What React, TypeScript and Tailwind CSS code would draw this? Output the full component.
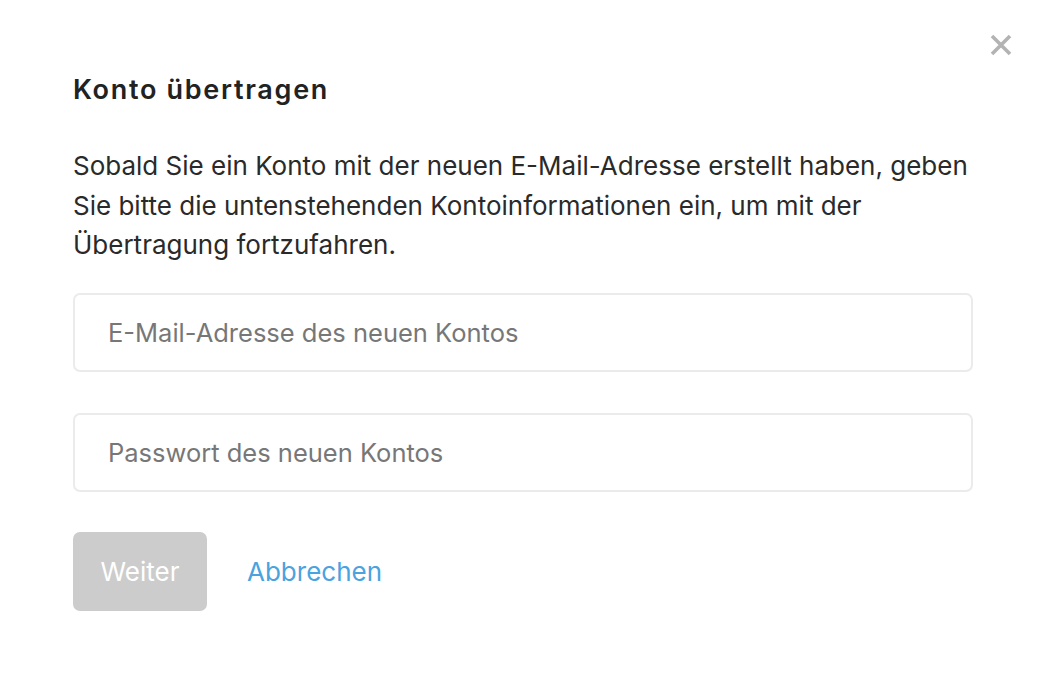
import React from "react";

const App = () => {
  return (
    <div
      className="relative w-[1048px] h-[678px] bg-white text-[#222222]"
      style={{ fontFamily: "Inter, 'Noto Sans', sans-serif" }}
    >
      <button className="absolute right-[35px] top-[33px] w-[24px] h-[24px] text-[#b3b3b3]">
        <svg viewBox="0 0 24 24" width="24" height="24" fill="none" stroke="currentColor" strokeWidth="3.6" strokeLinecap="butt">
          <path d="M3 3 L21 21 M21 3 L3 21" />
        </svg>
      </button>

      <div className="pl-[73px] pr-[75px] pt-[72px]">
        <h2 className="text-[27px] font-semibold leading-[36px] tracking-[1.7px]">Konto übertragen</h2>

        <p className="mt-[38px] text-[26px] leading-[39.5px] text-[#2a2a2a]">
          Sobald Sie ein Konto mit der neuen E-Mail-Adresse erstellt haben, geben Sie bitte die untenstehenden
          Kontoinformationen ein, um mit der Übertragung fortzufahren.
        </p>

        <div className="mt-[28px] flex flex-col gap-[41px] w-[900px]">
          <input
            type="email"
            placeholder="E-Mail-Adresse des neuen Kontos"
            className="h-[79px] rounded-[7px] border-2 border-[#ebebeb] px-[33px] text-[25.5px] placeholder:text-[#777777] outline-none"
          />
          <input
            type="password"
            placeholder="Passwort des neuen Kontos"
            className="h-[79px] rounded-[7px] border-2 border-[#ebebeb] px-[33px] text-[25.5px] placeholder:text-[#777777] outline-none"
          />
        </div>

        <div className="mt-[40px] flex items-center gap-[40px]">
          <button className="w-[134px] h-[79px] rounded-[7px] bg-[#cccccc] text-white text-[26px]">Weiter</button>
          <a className="text-[26px] text-[#4aa3df] cursor-pointer">Abbrechen</a>
        </div>
      </div>
    </div>
  );
};

export default App;
